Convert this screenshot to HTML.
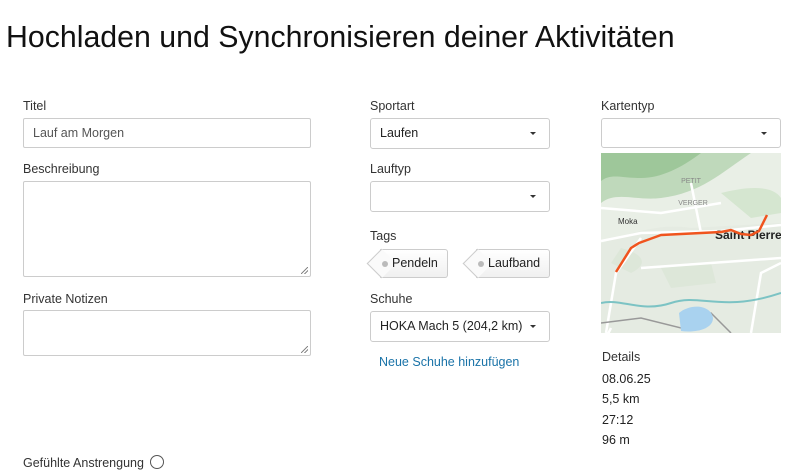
<!DOCTYPE html>
<html><head><meta charset="utf-8"><style>
*{box-sizing:border-box}
body{margin:0;width:798px;height:461px;overflow:hidden;background:#fff;font-family:"Liberation Sans",sans-serif;color:#242428;position:relative}
.a{position:absolute}
h1{position:absolute;left:6px;top:21px;margin:0;font-size:30.3px;font-weight:normal;color:#111;white-space:nowrap}
.lbl{position:absolute;font-size:12.5px;color:#333}
.box{position:absolute;border:1px solid #ccc;border-radius:2px;background:#fff;font-size:12.5px;color:#555}
.sel{position:absolute;border:1px solid #ccc;border-radius:3px;background:#fff;font-size:12.5px;color:#222;padding-left:9px;line-height:28px}
.sel:after{content:"";position:absolute;right:13px;top:13px;border-left:3px solid transparent;border-right:3px solid transparent;border-top:3px solid #333}
.tag{position:absolute;height:29px;border:1px solid #ccc;border-left:none;border-radius:0 3px 3px 0;background:linear-gradient(#fff,#f0f0f0);font-size:12.5px;line-height:27px;color:#222;padding-left:12px}
.tag:before{content:"";position:absolute;left:-9px;top:3px;width:20px;height:20px;transform:rotate(45deg);border-left:1px solid #ccc;border-bottom:1px solid #ccc;background:#fafafa;}
.tag i{position:absolute;left:2px;top:11px;width:6px;height:6px;border-radius:50%;background:#bbb;z-index:2}
.tag span{position:relative;z-index:2}
.grip{position:absolute;right:2px;bottom:2px;width:7px;height:7px;background:linear-gradient(135deg,transparent 45%,#888 45%,#888 55%,transparent 55%,transparent 70%,#888 70%,#888 80%,transparent 80%)}
.d{position:absolute;left:602px;font-size:12.5px;color:#222}
</style></head><body>
<h1>Hochladen und Synchronisieren deiner Aktivitäten</h1>

<div class="lbl" style="left:23px;top:99px">Titel</div>
<div class="box" style="left:23px;top:118px;width:288px;height:30px;padding:7px 9px;">Lauf am Morgen</div>
<div class="lbl" style="left:23px;top:162px">Beschreibung</div>
<div class="box" style="left:23px;top:181px;width:288px;height:96px"><div class="grip"></div></div>
<div class="lbl" style="left:23px;top:292px">Private Notizen</div>
<div class="box" style="left:23px;top:310px;width:288px;height:46px"><div class="grip"></div></div>
<div class="lbl" style="left:23px;top:455px">Gefühlte Anstrengung <span style="display:inline-block;width:14px;height:14px;border:1px solid #555;border-radius:50%;vertical-align:-2px;margin-left:3px"></span></div>

<div class="lbl" style="left:370px;top:99px">Sportart</div>
<div class="sel" style="left:370px;top:118px;width:180px;height:31px">Laufen</div>
<div class="lbl" style="left:370px;top:162px">Lauftyp</div>
<div class="sel" style="left:370px;top:181px;width:180px;height:31px"></div>
<div class="lbl" style="left:370px;top:229px">Tags</div>
<div class="tag" style="left:380px;top:249px;width:68px"><i></i><span>Pendeln</span></div>
<div class="tag" style="left:476px;top:249px;width:74px"><i></i><span>Laufband</span></div>
<div class="lbl" style="left:370px;top:292px">Schuhe</div>
<div class="sel" style="left:370px;top:311px;width:180px;height:31px">HOKA Mach 5 (204,2 km)</div>
<div class="lbl" style="left:379px;top:355px;color:#1a73a8">Neue Schuhe hinzufügen</div>

<div class="lbl" style="left:601px;top:99px">Kartentyp</div>
<div class="sel" style="left:601px;top:118px;width:180px;height:30px"></div>
<svg class="a" style="left:601px;top:153px" width="180" height="180" viewBox="0 0 180 180">
<rect width="180" height="180" fill="#e9efe6"/>
<path d="M0 0H150 C120 20 100 40 60 45 C35 48 15 38 0 50Z" fill="#bfd9bb"/>
<path d="M0 0H100 C80 15 60 25 40 25 C20 25 10 20 0 28Z" fill="#9ec79a"/>
<path d="M20 95 C40 100 50 110 30 120 L10 110Z M120 40 C140 35 170 30 180 45 V60 L150 65Z M60 115 L110 110 L115 130 L70 135Z" fill="#d5e6d0"/>
<path d="M0 90 C30 80 60 70 90 75 L180 70 V180 H0Z" fill="#e2e7e0" opacity=".6"/>
<path d="M0 88 L40 80 L120 78 L180 72 M5 180 L15 120 L40 85 M0 195 L10 175 M40 115 L180 105 M150 180 L160 120 L180 110 M90 30 L100 80 M0 55 L60 60 L120 50" stroke="#fff" stroke-width="2.5" fill="none"/>
<path d="M0 150 C20 145 40 160 70 150 C100 140 120 160 180 140" stroke="#7cc3c4" stroke-width="2" fill="none"/>
<path d="M0 170 L40 165 L80 175 L110 160 L130 180" stroke="#999" stroke-width="1.5" fill="none"/>
<path d="M78 160 C90 150 110 152 112 165 C112 176 95 180 80 178Z" fill="#a9d2ef"/>
<text x="90" y="30" font-size="7" fill="#888" text-anchor="middle" font-family="Liberation Sans">PETIT</text>
<text x="92" y="52" font-size="7" fill="#888" text-anchor="middle" font-family="Liberation Sans">VERGER</text>
<text x="17" y="71" font-size="8" fill="#333" font-family="Liberation Sans">Moka</text>
<text x="114" y="86" font-size="12" font-weight="bold" fill="#222" font-family="Liberation Sans">Saint Pierre</text>
<path d="M15 119 L30 95 L38 90 L60 82 L100 80 L120 79 L130 77 L140 81 L150 82 L158 78 L166 62" stroke="#f0541e" stroke-width="2.5" fill="none" stroke-linejoin="round"/>
</svg>
<div class="lbl" style="left:602px;top:350px">Details</div>
<div class="d" style="top:372px">08.06.25</div>
<div class="d" style="top:392px">5,5 km</div>
<div class="d" style="top:413px">27:12</div>
<div class="d" style="top:433px">96 m</div>
</body></html>
